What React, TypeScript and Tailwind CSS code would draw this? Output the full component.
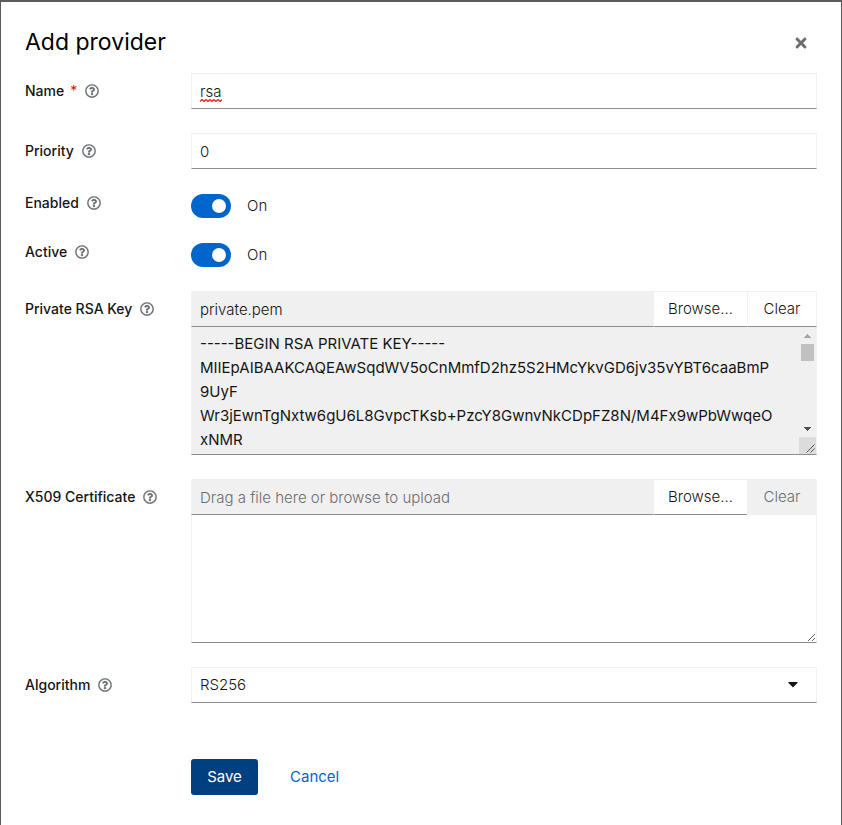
import { useState, type ReactNode } from "react";
import { FaCaretDown, FaRegQuestionCircle, FaTimes } from "react-icons/fa";

const KEY_TEXT = [
  "-----BEGIN RSA PRIVATE KEY-----",
  "MIIEpAIBAAKCAQEAwSqdWV5oCnMmfD2hz5S2HMcYkvGD6jv35vYBT6caaBmP",
  "9UyF",
  "Wr3jEwnTgNxtw6gU6L8GvpcTKsb+PzcY8GwnvNkCDpFZ8N/M4Fx9wPbWwqeO",
  "xNMR",
].join("\n");

const control =
  "block w-full h-9 rounded-none border border-[#f0f0f0] border-b-[#8a8d90] bg-white px-2 text-[#151515] outline-none";

function Row({
  id,
  label,
  required,
  compact,
  children,
}: {
  id: string;
  label: string;
  required?: boolean;
  compact?: boolean;
  children: ReactNode;
}) {
  return (
    <div className="grid grid-cols-[150px_minmax(0,1fr)] gap-x-4">
      <div className={compact ? "flex h-5 items-center gap-2" : "flex h-9 items-center gap-2"}>
        <label htmlFor={id} className="text-sm font-medium whitespace-nowrap">
          {label}
          {required && <span className="ml-1.5 font-normal text-[#c9190b]">*</span>}
        </label>
        <button type="button" aria-label={`More info for ${label}`} className="text-[#6a6e73]">
          <FaRegQuestionCircle size={14} stroke="currentColor" strokeWidth={6} />
        </button>
      </div>
      <div>{children}</div>
    </div>
  );
}

function Toggle({ id }: { id: string }) {
  const [on, setOn] = useState(true);
  return (
    <div className="flex h-[25px] items-end gap-4">
      <input
        id={id}
        type="checkbox"
        role="switch"
        checked={on}
        onChange={(e) => setOn(e.target.checked)}
        className="flex h-6 w-10 appearance-none items-center rounded-full bg-[#8a8d90] px-[5px] before:size-[14px] before:rounded-full before:bg-white before:shadow checked:justify-end checked:bg-[#0066cc]"
      />
      <span className="leading-6 text-[#151515]">{on ? "On" : "Off"}</span>
    </div>
  );
}

function FileBar({ id, name }: { id: string; name?: string }) {
  return (
    <div className="flex h-9">
      <input
        id={id}
        readOnly
        defaultValue={name}
        placeholder="Drag a file here or browse to upload"
        className="min-w-0 flex-1 border border-r-0 border-[#f0f0f0] border-b-[#8a8d90] bg-[#f0f0f0] px-2 pt-0.5 text-[#151515] outline-none placeholder:text-[#6a6e73] placeholder:opacity-100"
      />
      <button
        type="button"
        className="w-[94px] border border-r-0 border-[#f0f0f0] border-b-[#8a8d90] bg-white"
      >
        Browse...
      </button>
      <button
        type="button"
        disabled={!name}
        className="w-[70px] border border-[#f0f0f0] border-b-[#8a8d90] bg-white disabled:border-b-[#f0f0f0] disabled:bg-[#f0f0f0] disabled:text-[#6a6e73]"
      >
        Clear
      </button>
    </div>
  );
}

function Grip() {
  return (
    <svg width="9" height="9" viewBox="0 0 9 9" stroke="#555" fill="none" aria-hidden="true">
      <path d="M0.5 8.5L8.5 0.5M4.5 8.5L8.5 4.5" />
    </svg>
  );
}

function ScrollTrack() {
  return (
    <div className="flex w-[17px] flex-col items-center" aria-hidden="true">
      <span className="flex h-[17px] items-center">
        <svg width="7" height="4" viewBox="0 0 7 4" fill="#a3a3a3">
          <path d="M3 0h1v1h1v1h1v1h1v1H0V3h1V2h1V1h1z" />
        </svg>
      </span>
      <span className="h-[17px] w-[13px] bg-[#c1c1c1]" />
      <span className="flex-1" />
      <span className="flex h-[17px] items-center">
        <svg width="7" height="4" viewBox="0 0 7 4" fill="#505050">
          <path d="M0 0h7v1H6v1H5v1H4v1H3V3H2V2H1V1H0z" />
        </svg>
      </span>
      <span className="flex size-[17px] items-end justify-end bg-[#dcdcdc] p-px">
        <Grip />
      </span>
    </div>
  );
}

export default function App() {
  const [name, setName] = useState("rsa");
  return (
    <div className="min-h-screen border-x border-t-2 border-[#5b5b5b] bg-white p-6 font-['Inter','Liberation_Sans',sans-serif] text-[15px] font-light text-[#151515]">
      <header className="mb-4 flex h-[31px] items-center justify-between">
        <h1 className="pt-px text-[23px] font-normal text-black">Add provider</h1>
        <button type="button" aria-label="Close" className="px-2 pt-0.5 text-[#6a6e73]">
          <FaTimes size={16} />
        </button>
      </header>

      <form className="flex flex-col gap-6" onSubmit={(e) => e.preventDefault()}>
        <Row id="name" label="Name" required>
          <div className="relative">
            <input
              id="name"
              value={name}
              onChange={(e) => setName(e.target.value)}
              className={control}
            />
            {name === "rsa" && (
              <svg
                className="pointer-events-none absolute bottom-[7px] left-[9px]"
                width="22"
                height="3"
                viewBox="0 0 22 3"
                fill="none"
                stroke="#f0242c"
                aria-hidden="true"
              >
                <path
                  strokeWidth="1.4"
                  d="M0 2.5L2 .5L4 2.5L6 .5L8 2.5L10 .5L12 2.5L14 .5L16 2.5L18 .5L20 2.5L22 .5"
                />
              </svg>
            )}
          </div>
        </Row>

        <Row id="priority" label="Priority">
          <input id="priority" defaultValue="0" className={control} />
        </Row>

        <Row id="enabled" label="Enabled" compact>
          <Toggle id="enabled" />
        </Row>

        <Row id="active" label="Active" compact>
          <Toggle id="active" />
        </Row>

        <Row id="private-key" label="Private RSA Key">
          <FileBar id="private-key" name="private.pem" />
          <div className="flex h-32 border-x border-b border-x-[#f0f0f0] border-b-[#8a8d90] bg-[#f0f0f0]">
            <textarea
              readOnly
              wrap="off"
              aria-label="Private RSA Key contents"
              defaultValue={KEY_TEXT}
              className="min-w-0 flex-1 resize-none overflow-hidden pt-[5px] pl-2 leading-6 font-normal outline-none"
            />
            <ScrollTrack />
          </div>
        </Row>

        <Row id="certificate" label="X509 Certificate">
          <FileBar id="certificate" />
          <textarea
            aria-label="X509 Certificate contents"
            className="block h-32 w-full resize-y border-x border-b border-x-[#f0f0f0] border-b-[#8a8d90] px-2 pt-[5px] leading-6 font-normal outline-none"
          />
        </Row>

        <Row id="algorithm" label="Algorithm">
          <div className="relative">
            <select id="algorithm" className={`${control} appearance-none`}>
              <option>RS256</option>
            </select>
            <FaCaretDown
              size={16}
              className="pointer-events-none absolute top-[9px] right-4"
              aria-hidden="true"
            />
          </div>
        </Row>

        <div className="mt-8 flex gap-4 pl-[166px]">
          <button type="submit" className="h-9 w-[67px] rounded-[3px] bg-[#004080] font-normal text-white">
            Save
          </button>
          <button type="button" className="h-9 px-4 font-normal text-[#0066cc]">
            Cancel
          </button>
        </div>
      </form>
    </div>
  );
}
